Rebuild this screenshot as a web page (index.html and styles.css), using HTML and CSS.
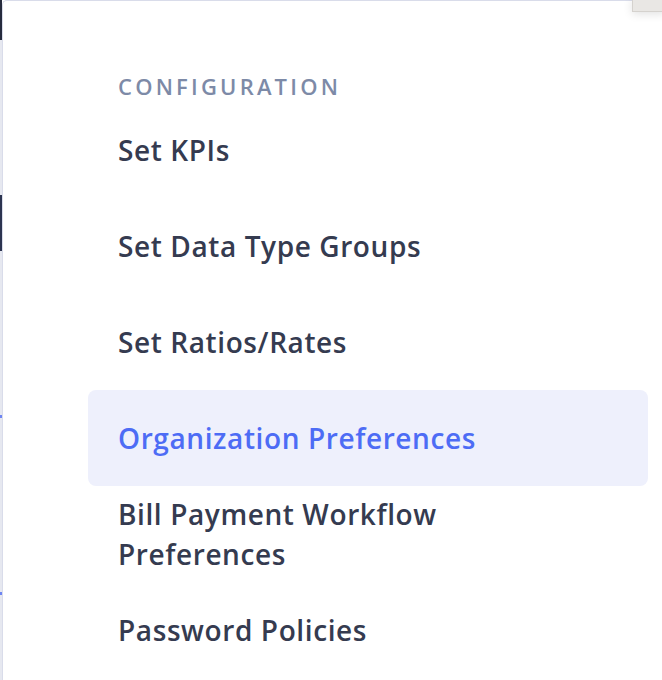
FILE: index.html
```html
<!DOCTYPE html>
<html lang="en">

<head>
    <meta charset="UTF-8">
    <meta name="viewport" content="width=device-width, initial-scale=1.0">
    <title>Configuration</title>
    <link rel="stylesheet" href="styles.css">
</head>

<body>
    <div class="page">
        <div class="backdrop">
            <div class="backdrop-top"></div>
            <div class="backdrop-mark"></div>
            <div class="backdrop-tick first"></div>
            <div class="backdrop-tick"></div>
        </div>
        <nav class="menu">
            <h4 class="menu-title">Configuration</h4>
            <a class="menu-item" href="#">Set KPIs</a>
            <a class="menu-item" href="#">Set Data Type Groups</a>
            <a class="menu-item" href="#">Set Ratios/Rates</a>
            <a class="menu-item active" href="#">Organization Preferences</a>
            <a class="menu-item" href="#">Bill Payment Workflow Preferences</a>
            <a class="menu-item" href="#">Password Policies</a>
        </nav>
        <div class="corner-tab"></div>
    </div>
</body>

</html>
```
FILE: styles.css
```css
body {
    margin: 0;
    padding: 0;
    font-family: 'Open Sans', 'Lato', sans-serif;
    background-color: #ffffff;
    color: #343a4f;
    overflow: hidden;
}

.page {
    display: flex;
    height: 680px;
    position: relative;
}

.backdrop {
    width: 2px;
    background-color: #e6e8f0;
    display: flex;
    flex-direction: column;
}

.backdrop-top {
    height: 40px;
    background-color: #262b3d;
}

.backdrop-mark {
    height: 56px;
    margin-top: 155px;
    background-color: #2c3450;
}

.backdrop-tick {
    height: 3px;
    margin-top: 174px;
    background-color: #6f86f2;
}

.backdrop-tick.first {
    margin-top: 164px;
}

.menu {
    flex: 1;
    display: flex;
    flex-direction: column;
    background: #ffffff;
    border-left: 1px solid #d9dcea;
    border-top: 1px solid #d9dcea;
    border-top-left-radius: 5px;
    padding: 0 14px 0 85px;
}

.menu-title {
    margin: 70px 0 0 30px;
    height: 31px;
    font-size: 22px;
    font-weight: 600;
    letter-spacing: 3.2px;
    text-transform: uppercase;
    color: #7d8aa7;
}

.menu-item {
    display: flex;
    align-items: center;
    min-height: 96px;
    padding: 0 40px 0 30px;
    box-sizing: border-box;
    font-size: 28px;
    line-height: 40px;
    font-weight: 600;
    letter-spacing: 0.6px;
    color: #353b50;
    text-decoration: none;
    border-radius: 8px;
}

.menu-item.active {
    background-color: #eef0fc;
    color: #4d6cf5;
}

.corner-tab {
    position: absolute;
    top: -2px;
    right: -4px;
    width: 32px;
    height: 12px;
    background: #e9e7e4;
    border: 1px solid #d5d2ce;
    box-shadow: 0 2px 10px rgba(0, 0, 0, 0.12);
}
```
